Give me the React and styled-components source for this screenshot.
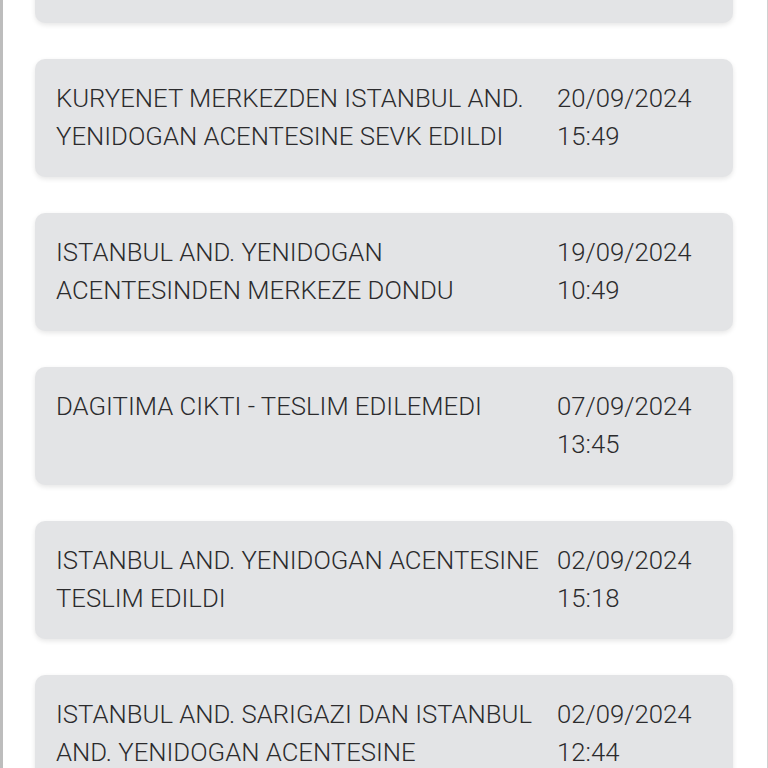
import React from "react";
import styled, { createGlobalStyle } from "styled-components";

const movements = [
  { id: 0, text: "KURYENET MERKEZE GIRIS YAPTI", date: "20/09/2024", time: "09:12" },
  {
    id: 1,
    text: "KURYENET MERKEZDEN ISTANBUL AND. YENIDOGAN ACENTESINE SEVK EDILDI",
    date: "20/09/2024",
    time: "15:49",
  },
  {
    id: 2,
    text: "ISTANBUL AND. YENIDOGAN ACENTESINDEN MERKEZE DONDU",
    date: "19/09/2024",
    time: "10:49",
  },
  { id: 3, text: "DAGITIMA CIKTI - TESLIM EDILEMEDI", date: "07/09/2024", time: "13:45" },
  {
    id: 4,
    text: "ISTANBUL AND. YENIDOGAN ACENTESINE TESLIM EDILDI",
    date: "02/09/2024",
    time: "15:18",
  },
  {
    id: 5,
    text: "ISTANBUL AND. SARIGAZI DAN ISTANBUL AND. YENIDOGAN ACENTESINE GONDERILDI",
    date: "02/09/2024",
    time: "12:44",
  },
];

export default function App() {
  return (
    <>
      <GlobalStyle />
      <Frame>
        <List>
          {movements.map((m) => (
            <Card key={m.id}>
              <Status>{m.text}</Status>
              <DateCol>
                {m.date}
                <br />
                {m.time}
              </DateCol>
            </Card>
          ))}
        </List>
      </Frame>
    </>
  );
}

const GlobalStyle = createGlobalStyle`
  html, body {
    margin: 0;
    padding: 0;
    background: #ffffff;
    overflow: hidden;
  }
  body {
    font-family: Roboto, "Noto Sans", sans-serif;
  }
`;

const Frame = styled.div`
  width: 768px;
  height: 768px;
  box-sizing: border-box;
  border-left: 3px solid #bdbdbd;
  border-right: 1px solid #d0d0d0;
  background: #ffffff;
  overflow: hidden;
`;

const List = styled.div`
  display: flex;
  flex-direction: column;
  gap: 36px;
  margin-top: -95px;
  padding: 0 34px 0 32px;
`;

const Card = styled.div`
  display: grid;
  grid-template-columns: 1fr 155px;
  padding: 20px 21px 22px;
  min-height: 76px;
  background: #e3e4e6;
  border-radius: 10px;
  box-shadow: 0 2px 5px rgba(0, 0, 0, 0.1);
`;

const Status = styled.div`
  font-size: 25.7px;
  font-weight: 300;
  line-height: 38px;
  color: #2b2b2d;
  padding-right: 12px;
`;

const DateCol = styled.div`
  font-size: 25.7px;
  font-weight: 300;
  line-height: 38px;
  color: #2b2b2d;
`;
